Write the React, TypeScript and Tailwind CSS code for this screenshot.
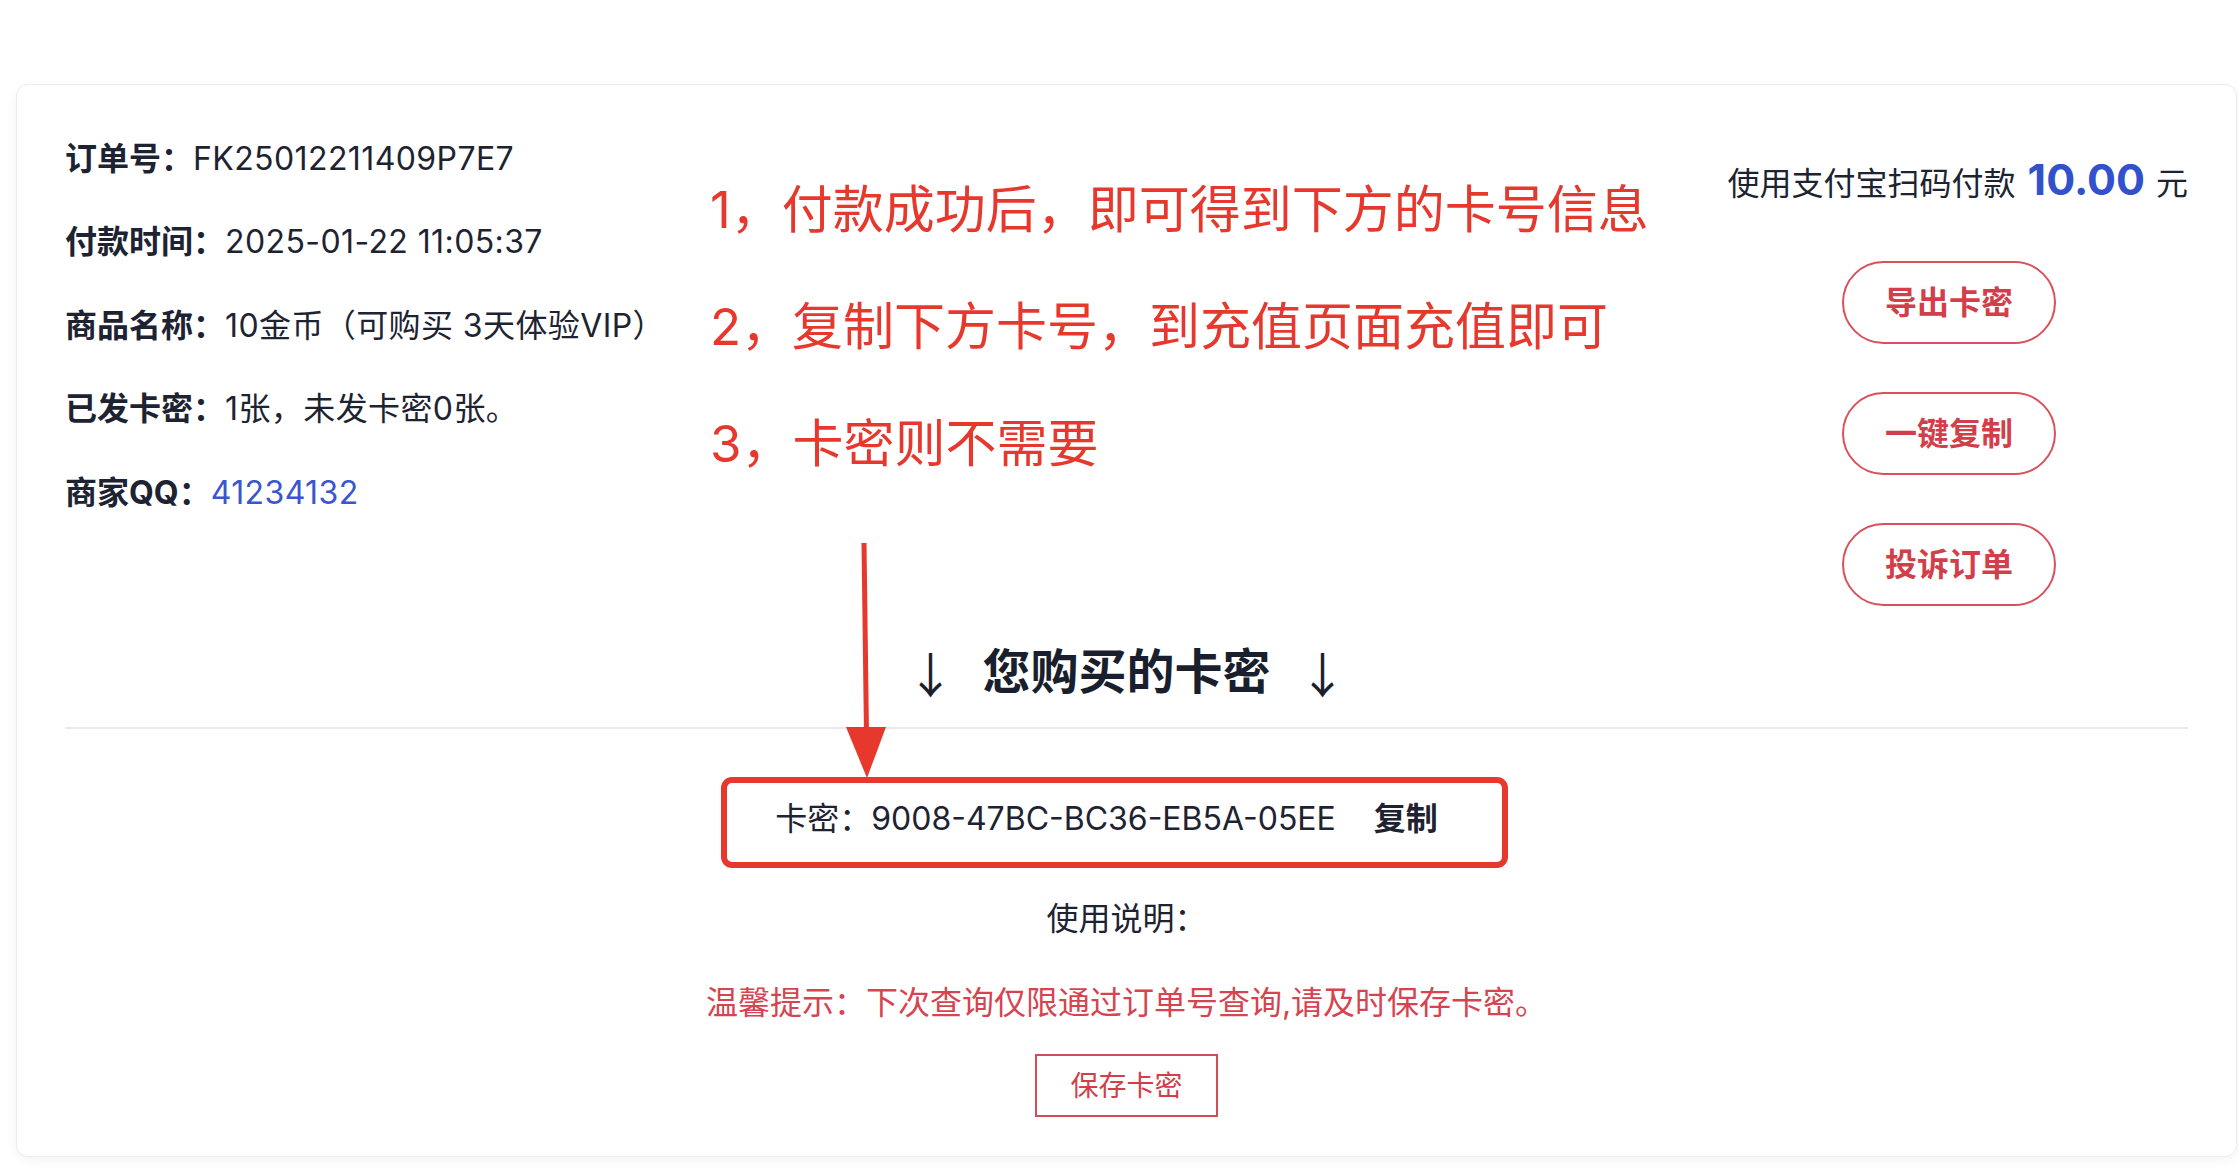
import React from "react";

const rows: { label: string; value: React.ReactNode }[] = [
  { label: "订单号：", value: "FK25012211409P7E7" },
  { label: "付款时间：", value: "2025-01-22 11:05:37" },
  { label: "商品名称：", value: "10金币（可购买 3天体验VIP）" },
  { label: "已发卡密：", value: "1张，未发卡密0张。" },
  {
    label: "商家QQ：",
    value: <span className="text-[#3a55d0]">41234132</span>,
  },
];

const buttons = ["导出卡密", "一键复制", "投诉订单"];

export default function App() {
  return (
    <div className="relative min-h-[1171px] bg-white pl-[16px] pr-[2px] pt-[84px] font-['Inter','Noto_Sans_CJK_SC',sans-serif] text-[#1e2331]">
      <div className="rounded-[12px] border border-[#ececec] bg-white px-[48px] pt-[32px] pb-[39px] text-[32px] shadow-[0_3px_12px_rgba(0,0,0,0.05)]">
        <div className="flex items-start justify-between">
          <div className="flex flex-col">
            {rows.map((r) => (
              <div key={r.label} className="flex h-[83.5px] items-center whitespace-nowrap">
                <span className="font-bold">{r.label}</span>
                <span className="tracking-[0.4px]">{r.value}</span>
              </div>
            ))}
          </div>
          <div className="flex flex-col items-end">
            <div className="mt-[30px] flex h-[50px] items-baseline whitespace-nowrap">
              <span>使用支付宝扫码付款</span>
              <span className="ml-[12px] text-[43px] font-bold text-[#3451cc]">10.00</span>
              <span className="ml-[11px]">元</span>
            </div>
            <div className="mt-[64px] mr-[132px] flex flex-col gap-[48px]">
              {buttons.map((b) => (
                <div
                  key={b}
                  className="flex h-[83px] w-[214px] items-center justify-center rounded-full border-2 border-[#d9505a] text-[32px] font-bold text-[#d23f4b]"
                >
                  {b}
                </div>
              ))}
            </div>
          </div>
        </div>

        <div className="mt-[36px] flex items-center justify-center text-[48px] leading-[60px] text-[#1a1f2d]">
          <span className="font-['Noto_Sans_CJK_SC',sans-serif] font-normal">↓</span>
          <span className="mx-[28px] font-bold">您购买的卡密</span>
          <span className="font-['Noto_Sans_CJK_SC',sans-serif] font-normal">↓</span>
        </div>
        <div className="mt-[25px] h-[2px] bg-[#e9e9ee]" />

        <div className="mt-[67px] flex h-[45px] items-center justify-center pr-[40px] whitespace-nowrap">
          <span>卡密：</span>
          <span>9008-47BC-BC36-EB5A-05EE</span>
          <span className="ml-[38px] font-bold">复制</span>
        </div>

        <div className="mt-[55px] h-[45px] text-center leading-[45px]">使用说明：</div>

        <div className="mt-[39px] h-[45px] text-center leading-[45px] text-[#d7434f]">
          温馨提示：下次查询仅限通过订单号查询,请及时保存卡密。
        </div>

        <div className="mx-auto mt-[29px] flex h-[63px] w-[183px] items-center justify-center border-2 border-[#d24e57] text-[28px] text-[#d23f4b]">
          保存卡密
        </div>
      </div>

      {/* annotations overlaid on the screenshot */}
      <div className="pointer-events-none absolute left-[710px] top-[180px] flex flex-col gap-[57px] text-[51px] leading-[60px] text-[#e6382c] whitespace-nowrap">
        <div>1，付款成功后，即可得到下方的卡号信息</div>
        <div>2，复制下方卡号，到充值页面充值即可</div>
        <div>3，卡密则不需要</div>
      </div>

      <svg
        className="pointer-events-none absolute left-0 top-0"
        width="2239"
        height="1171"
        viewBox="0 0 2239 1171"
      >
        <line x1="864" y1="543" x2="866.5" y2="735" stroke="#e6382c" strokeWidth="5" />
        <polygon points="846,727 886,727 867,778" fill="#e6382c" />
        <rect
          x="724"
          y="780"
          width="781"
          height="85"
          rx="8"
          ry="8"
          fill="none"
          stroke="#e6382c"
          strokeWidth="6"
        />
      </svg>
    </div>
  );
}
